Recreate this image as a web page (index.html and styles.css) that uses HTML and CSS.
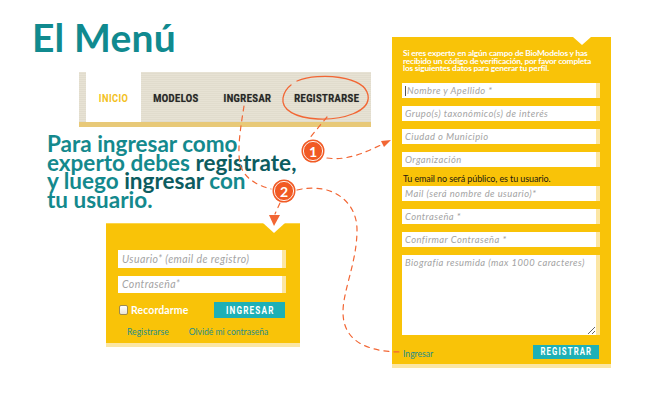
FILE: index.html
```html
<!DOCTYPE html>
<html lang="es">
<head>
<meta charset="utf-8">
<title>El Menú</title>
<link rel="stylesheet" href="styles.css">
</head>
<body>
<div class="page">
  <div class="left">
    <h1 class="title">El Menú</h1>
    <nav class="menu">
      <span class="menu-edge"></span>
      <a class="item item-inicio active"><span class="lbl">INICIO</span></a>
      <a class="item item-modelos"><span class="lbl">MODELOS</span></a>
      <a class="item item-ingresar"><span class="lbl">INGRESAR</span></a>
      <a class="item item-registrarse"><span class="lbl">REGISTRARSE</span></a>
    </nav>
    <p class="lead">Para ingresar como<br>experto debes <b>registrate,</b><br>y luego <b>ingresar</b> con<br>tu usuario.</p>
    <form class="login">
      <input class="field field-lg" type="text" placeholder="Usuario* (email de registro)">
      <input class="field field-lg" type="password" placeholder="Contraseña*">
      <div class="login-row">
        <label class="remember"><input class="check" type="checkbox">Recordarme</label>
        <button class="btn btn-login" type="button"><span class="lbl">INGRESAR</span></button>
      </div>
      <div class="login-links">
        <a class="link">Registrarse</a>
        <a class="link">Olvidé mi contraseña</a>
      </div>
    </form>
  </div>
  <form class="register">
    <p class="intro">Si eres experto en algún campo de BioModelos y has<br>recibido un código de verificación, por favor completa<br>los siguientes datos para generar tu perfil.</p>
    <div class="fields">
      <div class="first-wrap"><input class="field field-sm" type="text" placeholder="Nombre y Apellido *"><span class="caret"></span></div>
      <input class="field field-sm" type="text" placeholder="Grupo(s) taxonómico(s) de interés">
      <input class="field field-sm" type="text" placeholder="Ciudad o Municipio">
      <input class="field field-sm" type="text" placeholder="Organización">
    </div>
    <p class="note">Tu email no será público, es tu usuario.</p>
    <div class="fields">
      <input class="field field-sm" type="text" placeholder="Mail (será nombre de usuario)*">
      <input class="field field-sm" type="password" placeholder="Contraseña *">
      <input class="field field-sm" type="password" placeholder="Confirmar Contraseña *">
      <textarea class="field field-sm bio" placeholder="Biografía resumida (max 1000 caracteres)"></textarea>
    </div>
    <div class="register-row">
      <a class="link">Ingresar</a>
      <button class="btn btn-register" type="button"><span class="lbl">REGISTRAR</span></button>
    </div>
  </form>
  <svg class="annot" width="658" height="400" viewBox="0 0 658 400" aria-hidden="true">
    <g fill="none" stroke="#f26634" stroke-width="1.2" stroke-dasharray="5 5" stroke-linecap="round">
      <path d="M244 106 C 241 125, 237 148, 240 164 C 244 178, 256 185, 271 189"/>
      <path d="M327 117 L 308 140"/>
      <path d="M327 158 C 348 161, 366 152, 383 144"/>
      <path d="M280 203 L 275 214"/>
      <path d="M297 190 C 330 182, 357 200, 357 230 C 357 262, 343 290, 343 312 C 343 344, 372 352, 402 352"/>
    </g>
    <path d="M297 81 C 320 72, 364 76, 368 95 C 371 112, 342 120, 318 119 C 296 118, 281 110, 283 98 C 284 92, 287 88, 291 85" fill="none" stroke="#f26634" stroke-width="1.3" stroke-linecap="round"/>
    <polygon points="391,140 381,141 384,147" fill="#f26634"/>
    <polygon points="269,215 280,215 274,226" fill="#f26634"/>
    <g>
      <circle cx="313" cy="151" r="11.5" fill="#f15a24"/>
      <circle cx="313" cy="151" r="9.6" fill="none" stroke="#fff" stroke-width="0.9"/>
      <text x="313" y="156.5" class="num">1</text>
      <circle cx="284" cy="191" r="11.5" fill="#f15a24"/>
      <circle cx="284" cy="191" r="9.6" fill="none" stroke="#fff" stroke-width="0.9"/>
      <text x="284" y="196.5" class="num">2</text>
    </g>
  </svg>
</div>
</body>
</html>
```

FILE: styles.css
```css
* { box-sizing: border-box; }
html, body { margin: 0; padding: 0; background: #fff; }
body { font-family: Lato, "Open Sans", sans-serif; }

.page {
  position: relative;
  width: 658px;
  height: 400px;
  display: flex;
  align-items: flex-start;
  overflow: hidden;
}

.left {
  width: 392px;
  flex: none;
  display: flex;
  flex-direction: column;
  align-items: flex-start;
}

.title {
  margin: 18px 0 0 32px;
  font: 700 39px/39px Lato, sans-serif;
  color: #108a8f;
  letter-spacing: 0.2px;
}

.menu {
  margin: 15px 0 0 79px;
  width: 292px;
  height: 55px;
  display: flex;
  background: repeating-linear-gradient(180deg, #e7e2d4 0 1px, #e1dccd 1px 2px);
  border-bottom: 5px solid #e8c978;
}
.menu-edge { width: 7px; flex: none; }
.item {
  display: flex;
  align-items: center;
  justify-content: center;
  font: 700 11px/1 Roboto, "DejaVu Sans", sans-serif;
  letter-spacing: 0.5px;
  color: #262626;
  text-shadow: 0 0 1px rgba(0,0,0,0.45);
  padding-top: 2px;
}
.lbl {
  display: inline-block;
  transform: scaleX(0.84);
  white-space: nowrap;
}
.item-inicio { width: 55px; background: #fff; color: #f3bf22; text-shadow: none; }
.item-modelos { width: 70px; }
.item-ingresar { width: 72px; }
.item-registrarse { width: 88px; }

.lead {
  margin: 8px 0 0 47px;
  font: 700 22.5px/18.5px Lato, sans-serif;
  color: #14898d;
  letter-spacing: 0;
}
.lead b { color: #0c5c60; font-weight: 700; }

.login {
  position: relative;
  margin: 14px 0 0 106px;
  width: 194px;
  height: 124px;
  padding: 26px 14px 0 12px;
  background: #f9c308;
  border-top: 1px solid #fcd54a;
  border-bottom: 4px solid #fbe6a4;
  display: flex;
  flex-direction: column;
}
.login::before,
.register::before {
  content: "";
  position: absolute;
  top: -1px;
  width: 0;
  height: 0;
  border-left: 11px solid transparent;
  border-right: 11px solid transparent;
  border-top: 10px solid #fff;
}
.login::before { left: 157px; }

.field {
  display: block;
  border: 0;
  border-right: 4px solid #fce6a4;
  background: #fff;
  outline: none;
  margin: 0;
  font-family: Lato, sans-serif;
  font-style: italic;
  color: #999;
}
.field::placeholder { color: #a3a3a3; opacity: 1; }
.field-lg {
  width: 168px;
  height: 17.5px;
  padding: 0 0 0 4px;
  font-size: 10.5px;
  letter-spacing: 0.4px;
}
.field-lg + .field-lg { margin-top: 8px; }

.login-row {
  margin-top: 9px;
  display: flex;
  align-items: center;
  justify-content: space-between;
  width: 167px;
}
.remember {
  display: flex;
  align-items: center;
  font: 700 10.5px/1 Lato, sans-serif;
  color: #fff;
  letter-spacing: 0.1px;
}
.check {
  appearance: none;
  -webkit-appearance: none;
  width: 9px;
  height: 10px;
  margin: 0 3px 0 1px;
  border: 1px solid #9c8a52;
  border-radius: 2px;
  background: linear-gradient(#ffffff, #e9e4d6);
}

.btn {
  border: 0;
  padding: 0;
  background: #1db0b6;
  color: #fff;
  font: 700 11px/1 Roboto, "DejaVu Sans", sans-serif;
  letter-spacing: 1.6px;
  display: flex;
  align-items: center;
  justify-content: center;
}
.btn .lbl { transform: scaleX(0.74); padding-left: 1.6px; }
.btn-login { width: 71px; height: 16px; }

.login-links {
  margin: 8px 0 0 9px;
  display: flex;
  gap: 20px;
}
.link {
  font: 400 8.6px/12px Lato, sans-serif;
  color: #1f8d8a;
}

.register {
  position: relative;
  margin-top: 37px;
  width: 219px;
  height: 331px;
  padding: 13px 11px 0 10px;
  background: #f9c308;
  border-bottom: 4px solid #fbe6a4;
  flex: none;
}
.register::before {
  left: 181px;
  top: 0;
  border-left-width: 9px;
  border-right-width: 9px;
  border-top-width: 8px;
}
.intro {
  margin: 0 0 0 1px;
  font: 700 8.4px/7.6px Lato, sans-serif;
  color: #fff;
  letter-spacing: -0.2px;
  white-space: nowrap;
}
.fields { display: flex; flex-direction: column; gap: 8px; }
.intro + .fields { margin-top: 10px; }
.first-wrap { position: relative; }
.caret {
  position: absolute;
  left: 3px;
  top: 3px;
  width: 1px;
  height: 10px;
  background: #555;
}
.field-sm {
  width: 198px;
  height: 15px;
  padding: 0 0 0 3px;
  font-size: 9.4px;
  letter-spacing: 0.45px;
}
.first-wrap .field-sm { padding-left: 5px; }
.note {
  margin: 6px 0 1px 1px;
  font: 400 9px/12px Lato, sans-serif;
  color: #1e1a10;
  letter-spacing: -0.1px;
}
.bio {
  height: 80px;
  padding-top: 2px;
  resize: both;
}
.register-row {
  margin-top: 9px;
  display: flex;
  align-items: center;
  justify-content: space-between;
  width: 197px;
}
.register-row .link { margin-left: 1px; margin-top: 4px; }
.btn-register { width: 66px; height: 14px; font-size: 10.5px; letter-spacing: 1.5px; }

.annot {
  position: absolute;
  left: 0;
  top: 0;
  pointer-events: none;
}
.num {
  font: 700 14px Lato, sans-serif;
  fill: #fff;
  text-anchor: middle;
}
```
